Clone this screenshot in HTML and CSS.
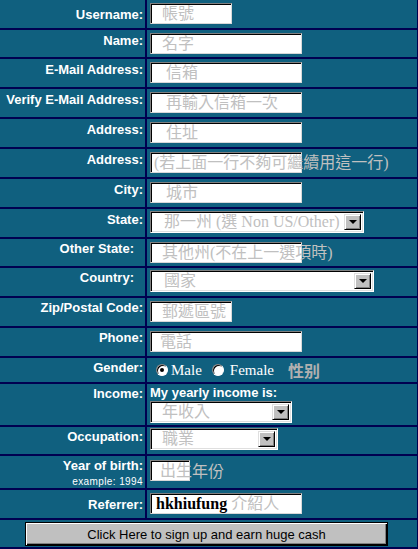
FILE: index.html
```html
<!DOCTYPE html>
<html lang="zh-Hant">
<head>
    <meta charset="UTF-8">
    <meta name="viewport" content="width=device-width, initial-scale=1.0">
    <title>Sign up</title>
    <link rel="stylesheet" href="styles.css">
</head>
<body>
    <form class="signup">
        <div class="label mid">Username:</div>
        <div class="cell"><div class="field w82">帳號</div></div>

        <div class="label">Name:</div>
        <div class="cell"><div class="field">名字</div></div>

        <div class="label">E-Mail Address:</div>
        <div class="cell"><div class="field far">信箱</div></div>

        <div class="label">Verify E-Mail Address:</div>
        <div class="cell"><div class="field far">再輸入信箱一次</div></div>

        <div class="label">Address:</div>
        <div class="cell"><div class="field far">住址</div></div>

        <div class="label">Address:</div>
        <div class="cell"><div class="field near">(若上面一行不夠可繼續用這一行)</div></div>

        <div class="label">City:</div>
        <div class="cell"><div class="field far">城市</div></div>

        <div class="label">State:</div>
        <div class="cell sel-cell">
            <div class="select w214"><span class="txt">那一州 (選 Non US/Other)</span><span class="btn"></span></div>
        </div>

        <div class="label lo pad">Other State:</div>
        <div class="cell"><div class="field">其他州(不在上一選項時)</div></div>

        <div class="label lo pad">Country:</div>
        <div class="cell sel-cell">
            <div class="select w224"><span class="txt">國家</span><span class="btn"></span></div>
        </div>

        <div class="label lo">Zip/Postal Code:</div>
        <div class="cell"><div class="field w82">郵遞區號</div></div>

        <div class="label lo">Phone:</div>
        <div class="cell"><div class="field close">電話</div></div>

        <div class="label lo">Gender:</div>
        <div class="cell gender">
            <span class="radio on"></span><span class="opt">Male</span>
            <span class="radio second"></span><span class="opt">Female</span>
            <span class="hint">性别</span>
        </div>

        <div class="label lo">Income:</div>
        <div class="cell income">
            <div class="note">My yearly income is:</div>
            <div class="select w142"><span class="txt close">年收入</span><span class="btn"></span></div>
        </div>

        <div class="label lo">Occupation:</div>
        <div class="cell occ">
            <div class="select w128"><span class="txt close">職業</span><span class="btn"></span></div>
        </div>

        <div class="label lo">Year of birth:<small>example: 1994</small></div>
        <div class="cell year">
            <div class="field w40 close">出生</div><span class="after">年份</span>
        </div>

        <div class="label mid">Referrer:</div>
        <div class="cell"><div class="field ref"><b>hkhiufung</b> 介紹人</div></div>

        <div class="submit-row">
            <button type="submit" class="submit">Click Here to sign up and earn huge cash</button>
        </div>
    </form>
</body>
</html>
```

FILE: styles.css
```css
body{margin:0;background:#000050;}

.signup{
    display:grid;
    grid-template-columns:145px 270px;
    grid-template-rows:28px 27px 28px 28px 28px 28px 28px 28px 27px 28px 28px 28px 24px 41px 27px 32px 28px 27px;
    gap:2px;
    padding:0 1px 2px 0;
    background:#000050;
    width:418px;
    box-sizing:border-box;
}

.label{
    background:#10607f;
    color:#fff;
    font:bold 13px/15px "Liberation Sans", Arial, sans-serif;
    text-align:right;
    padding:3px 2px 0 0;
}
.label.lo{padding-top:2px;}
.label.pad{padding-right:11px;}
.label.mid{display:flex;align-items:center;justify-content:flex-end;padding-top:0;}
.label small{display:block;font-weight:normal;font-size:10px;line-height:12px;letter-spacing:0.4px;margin-top:3px;}

.cell{background:#10607f;padding:3px 0 0 3px;}
.sel-cell{padding-top:2px;}

.field{
    box-sizing:border-box;
    width:152px;
    height:21px;
    background:#fff;
    border:1px solid;
    border-color:#808080 #d8d8d8 #d8d8d8 #808080;
    box-shadow:inset 1px 1px #000;
    padding:1px 0 0 11px;
    color:#c0c0c0;
    font:16px/18px "Liberation Serif", "Noto Sans CJK TC", serif;
    white-space:nowrap;
}
.field.far{padding-left:15px;}
.field.near{padding-left:3px;}
.field.close{padding-left:9px;}
.w82{width:82px;}
.w40{width:40px;}

.select{
    box-sizing:border-box;
    display:flex;
    height:22px;
    background:#fff;
    border:1px solid;
    border-color:#808080 #fff #fff #808080;
    box-shadow:inset 1px 1px #000, inset -1px -1px #dfdfdf;
    padding:2px;
    color:#c0c0c0;
    font:16px/18px "Liberation Serif", "Noto Sans CJK TC", serif;
}
.select .txt{flex:1;padding-left:11px;white-space:nowrap;margin-top:-1px;}
.select .txt.close{padding-left:9px;}
.select .btn{
    box-sizing:border-box;
    width:17px;
    flex:none;
    background:#c0c0c0;
    border:1px solid;
    border-color:#dfdfdf #000 #000 #dfdfdf;
    box-shadow:inset 1px 1px #fff, inset -1px -1px #808080;
    display:flex;
    align-items:center;
    justify-content:center;
}
.select .btn::after{
    content:"";
    width:0;
    border:4px solid transparent;
    border-top-color:#000;
    border-bottom:0;
}
.w214{width:214px;}
.w224{width:224px;}
.w142{width:142px;}
.w128{width:128px;}

.gender{display:flex;align-items:center;padding-top:0;}
.radio{
    box-sizing:border-box;
    width:12px;
    height:12px;
    border-radius:50%;
    background:#fff;
    border:1px solid;
    border-color:#808080 #fff #fff #808080;
    box-shadow:inset 1px 1px #000;
    display:flex;
    align-items:center;
    justify-content:center;
    margin-left:6px;
}
.radio.on::after{content:"";width:4px;height:4px;border-radius:50%;background:#000;}
.opt{color:#fff;font:15px/17px "Liberation Serif", "Times New Roman", serif;margin-left:3px;}
.opt + .radio.second{margin-left:10px;}
.radio.second + .opt{margin-left:6px;}
.hint{color:#b0b0b0;font:bold 16px/18px "Noto Sans CJK TC", sans-serif;margin-left:14px;}

.income{padding-top:1px;}
.note{color:#fff;font:bold 13px/15px "Liberation Sans", Arial, sans-serif;margin-bottom:1px;}
.occ{padding-top:1px;}

.year{display:flex;align-items:flex-start;padding-top:4px;}
.after{color:#c0c0c0;font:16px/21px "Noto Sans CJK TC", sans-serif;margin-left:2px;}

.ref{padding-left:5px;color:#c0c0c0;}
.ref b{color:#000;font:bold 16px/18px "Liberation Serif", "Times New Roman", serif;}

.submit-row{
    grid-column:1 / -1;
    background:#10607f;
    display:flex;
    justify-content:center;
    padding:2px 4px 0 0;
}
.submit{
    box-sizing:border-box;
    width:363px;
    height:24px;
    margin:0;
    background:#c0c0c0;
    border:1px solid #000;
    box-shadow:inset 1px 1px #fff, inset -1px -1px #000, inset -2px -2px #808080;
    color:#000;
    font:13px/15px "Liberation Sans", Arial, sans-serif;
    padding:0;
}
```
